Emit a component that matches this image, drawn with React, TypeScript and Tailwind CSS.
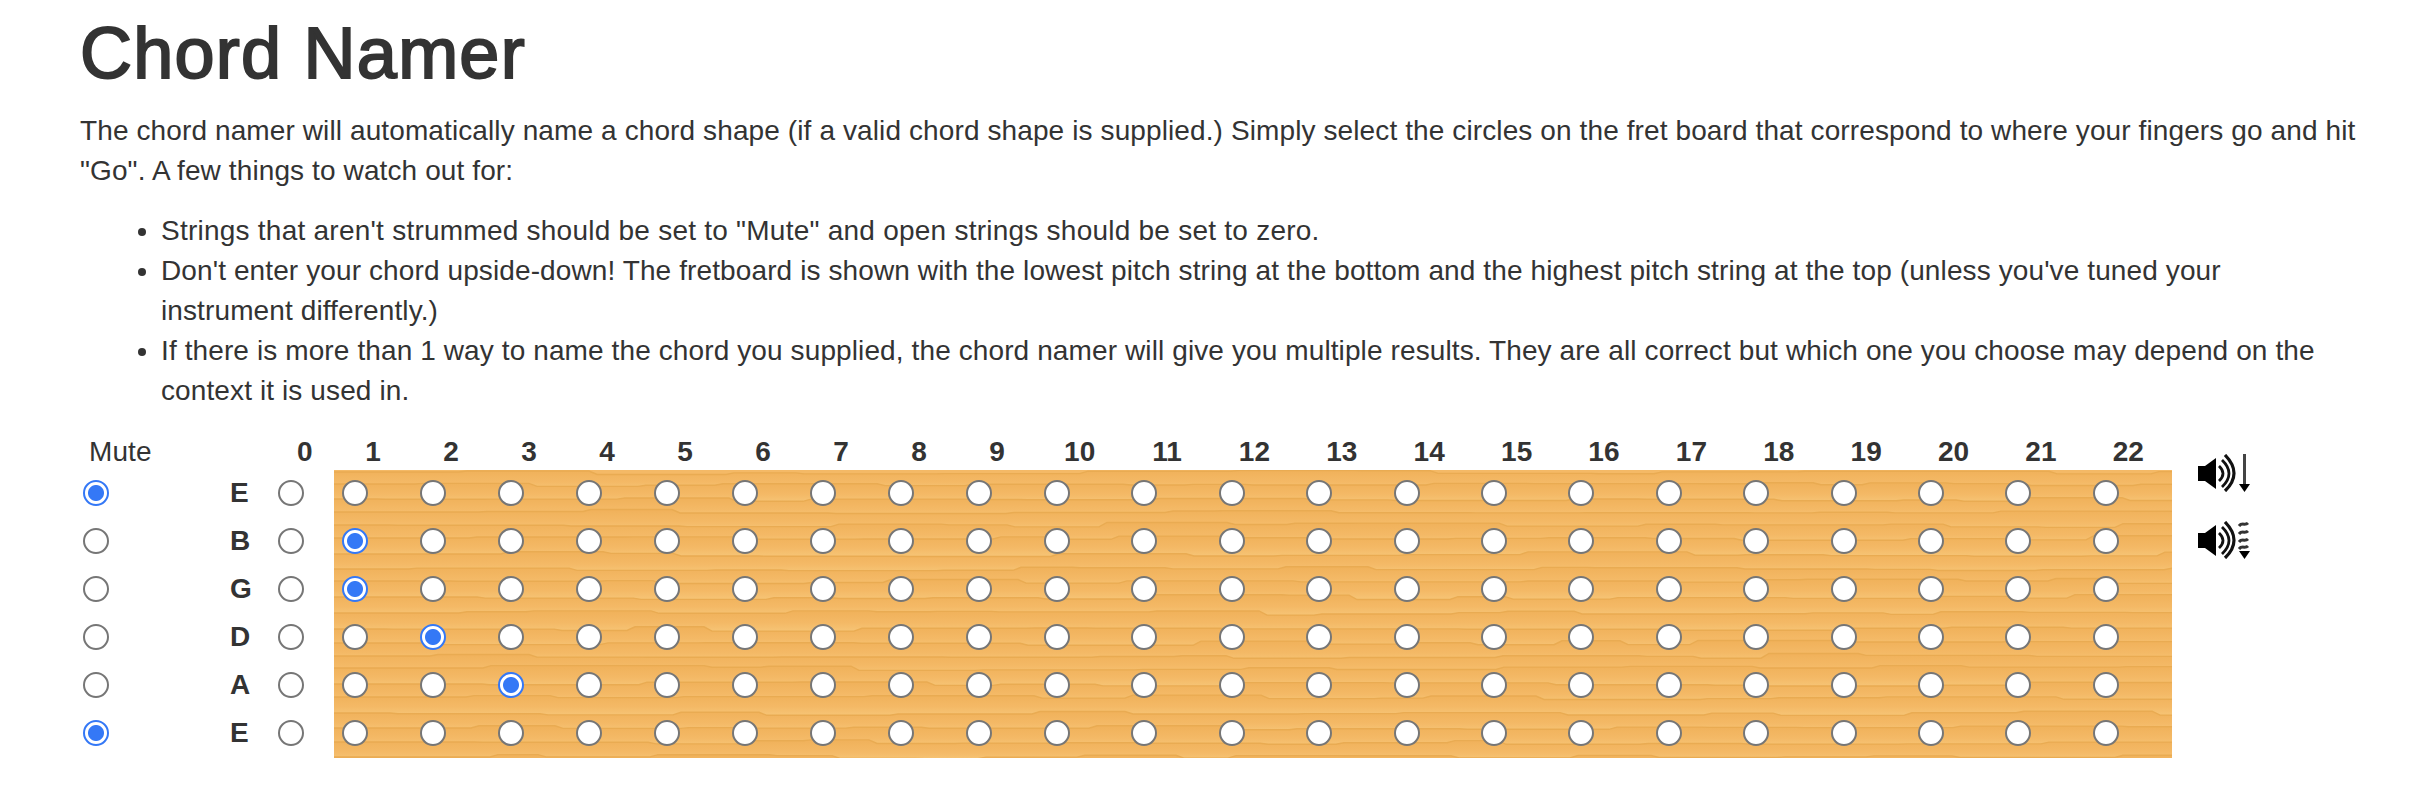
const FRETS = Array.from({ length: 22 }, (_, i) => i + 1);
const STRINGS = [
  { name: "E", checked: "mute" },
  { name: "B", checked: 1 },
  { name: "G", checked: 1 },
  { name: "D", checked: 2 },
  { name: "A", checked: 3 },
  { name: "E", checked: "mute" },
];

function Radio({ group, on }: { group: string; on?: boolean }) {
  return (
    <input
      type="radio"
      name={group}
      defaultChecked={on}
      className="block h-[26px] w-[26px] appearance-none rounded-full border-2 border-[#767676] bg-white checked:border-[#3478f6] checked:bg-[radial-gradient(circle,#3478f6_0,#3478f6_7.5px,#ffffff_8.5px)]"
    />
  );
}

function SpeakerIcon({ slow }: { slow?: boolean }) {
  return (
    <svg width="52" height="38" viewBox="0 0 52 38" className="block">
      <path d="M0 12 H7 L18 4 V35 L7 27 H0 Z" fill="#000" />
      <g fill="none" stroke="#111">
        <path d="M21 12 Q29 19.5 21 27" strokeWidth="2.8" />
        <path d="M24 6 Q38 19.5 24 33" strokeWidth="2.8" />
        <path d="M27 1 Q45 19.5 27 37" strokeWidth="3.2" />
      </g>
      {slow ? (
        <g fill="none" stroke="#333" strokeWidth="3">
          <path d="M41 5 C44 1 47 5 50 2" />
          <path d="M41 13 C44 9 47 13 50 10" />
          <path d="M41 21 C44 17 47 21 50 18" />
          <path d="M41 28 C44 24 47 28 50 25" />
        </g>
      ) : (
        <path d="M46.5 0 V31" stroke="#444" strokeWidth="3" />
      )}
      <path d="M41 30 H52 L46.5 38 Z" fill="#000" />
    </svg>
  );
}

// seeded so the grain stays the same between renders
function grainBands() {
  let seed = 12345;
  const rand = () => {
    seed = (seed * 1103515245 + 12345) % 2147483648;
    return seed / 2147483648;
  };
  const bands: { top: string; y: number }[] = [];
  for (let y = 2; y < 288; y += 12 + Math.floor(rand() * 5)) {
    let x = 0;
    let cur = y;
    let d = `M0 ${cur}`;
    while (x < 1838) {
      const run = 40 + rand() * 130;
      x += run;
      d += ` H${x.toFixed(0)}`;
      cur = y + (rand() - 0.5) * 5;
      x += 8;
      d += ` L${x.toFixed(0)} ${cur.toFixed(1)}`;
    }
    bands.push({ top: d, y });
  }
  return bands;
}

function Wood() {
  const bands = grainBands();
  return (
    <svg className="absolute inset-0 h-full w-full" viewBox="0 0 1838 288" preserveAspectRatio="none">
      <defs>
        <linearGradient id="grain" x1="0" y1="0" x2="0" y2="1">
          <stop offset="0" stopColor="#f0b15a" />
          <stop offset="0.6" stopColor="#f4b966" />
          <stop offset="1" stopColor="#f6c475" />
        </linearGradient>
      </defs>
      <rect width="1838" height="288" fill="#f4b966" />
      {bands.map((b, i) => (
        <g key={i}>
          <path d={`${b.top} V${b.y + 18} H0 Z`} fill="url(#grain)" />
          <path d={b.top} fill="none" stroke="#e9ab52" strokeWidth="1.4" />
        </g>
      ))}
    </svg>
  );
}

export default function App() {
  return (
    <div className="min-h-[792px] bg-white pl-[80px] pr-[70px] font-['Liberation_Sans',Arial,sans-serif] text-[28px] leading-[40px] tracking-[0.11px] text-[#333333]">
      <h1 className="pt-[14px] pb-[18px] text-[72px] leading-[79px] font-normal tracking-[1.25px] [-webkit-text-stroke:2px_#333333]">Chord Namer</h1>
      <p className="mb-[20px]">
        The chord namer will automatically name a chord shape (if a valid chord shape is supplied.) Simply select the circles on the fret board that correspond to where your fingers go and hit "Go". A few things to watch out for:
      </p>
      <ul className="mb-[20px] list-disc pl-[81px]">
        <li className="tracking-[0.24px]">Strings that aren't strummed should be set to "Mute" and open strings should be set to zero.</li>
        <li>Don't enter your chord upside-down! The fretboard is shown with the lowest pitch string at the bottom and the highest pitch string at the top (unless you've tuned your instrument differently.)</li>
        <li>If there is more than 1 way to name the chord you supplied, the chord namer will give you multiple results. They are all correct but which one you choose may depend on the context it is used in.</li>
      </ul>

      <div className="flex">
        {/* Mute column */}
        <div className="w-[150px] shrink-0">
          <div className="h-[39px] pl-[9px] pt-[1px]">Mute</div>
          {STRINGS.map((s, i) => (
            <div key={i} className="flex h-[48px] pl-[3px] pt-[10px]">
              <Radio group={`s${i}`} on={s.checked === "mute"} />
            </div>
          ))}
        </div>

        {/* String names */}
        <div className="w-[48px] shrink-0 font-bold">
          <div className="h-[39px]" />
          {STRINGS.map((s, i) => (
            <div key={i} className="flex h-[46px] mb-[2px] items-center">{s.name}</div>
          ))}
        </div>

        {/* Open strings */}
        <div className="w-[56px] shrink-0 font-bold">
          <div className="h-[39px] pl-[19px] pt-[1px]">0</div>
          {STRINGS.map((s, i) => (
            <div key={i} className="flex h-[48px] pt-[10px] font-normal">
              <Radio group={`s${i}`} />
            </div>
          ))}
        </div>

        {/* Frets */}
        <div className="w-[1838px] shrink-0">
          <div className="flex h-[39px] pt-[1px] font-bold">
            {FRETS.map((f) => (
              <div key={f} className={`${f < 10 ? "w-[78px]" : "w-[87.4px]"} text-center`}>{f}</div>
            ))}
          </div>
          <div className="relative h-[288px]">
            <Wood />
            {STRINGS.map((s, i) => (
              <div key={i} className="relative flex h-[48px] pt-[10px]">
                {FRETS.map((f) => (
                  <div key={f} className={`${f < 10 ? "w-[78px]" : "w-[87.4px]"} pl-[8px]`}>
                    <Radio group={`s${i}`} on={s.checked === f} />
                  </div>
                ))}
              </div>
            ))}
          </div>
        </div>

        {/* Play buttons */}
        <div className="ml-[26px] mt-[23px] flex flex-col gap-[29px]">
          <SpeakerIcon />
          <SpeakerIcon slow />
        </div>
      </div>
    </div>
  );
}
